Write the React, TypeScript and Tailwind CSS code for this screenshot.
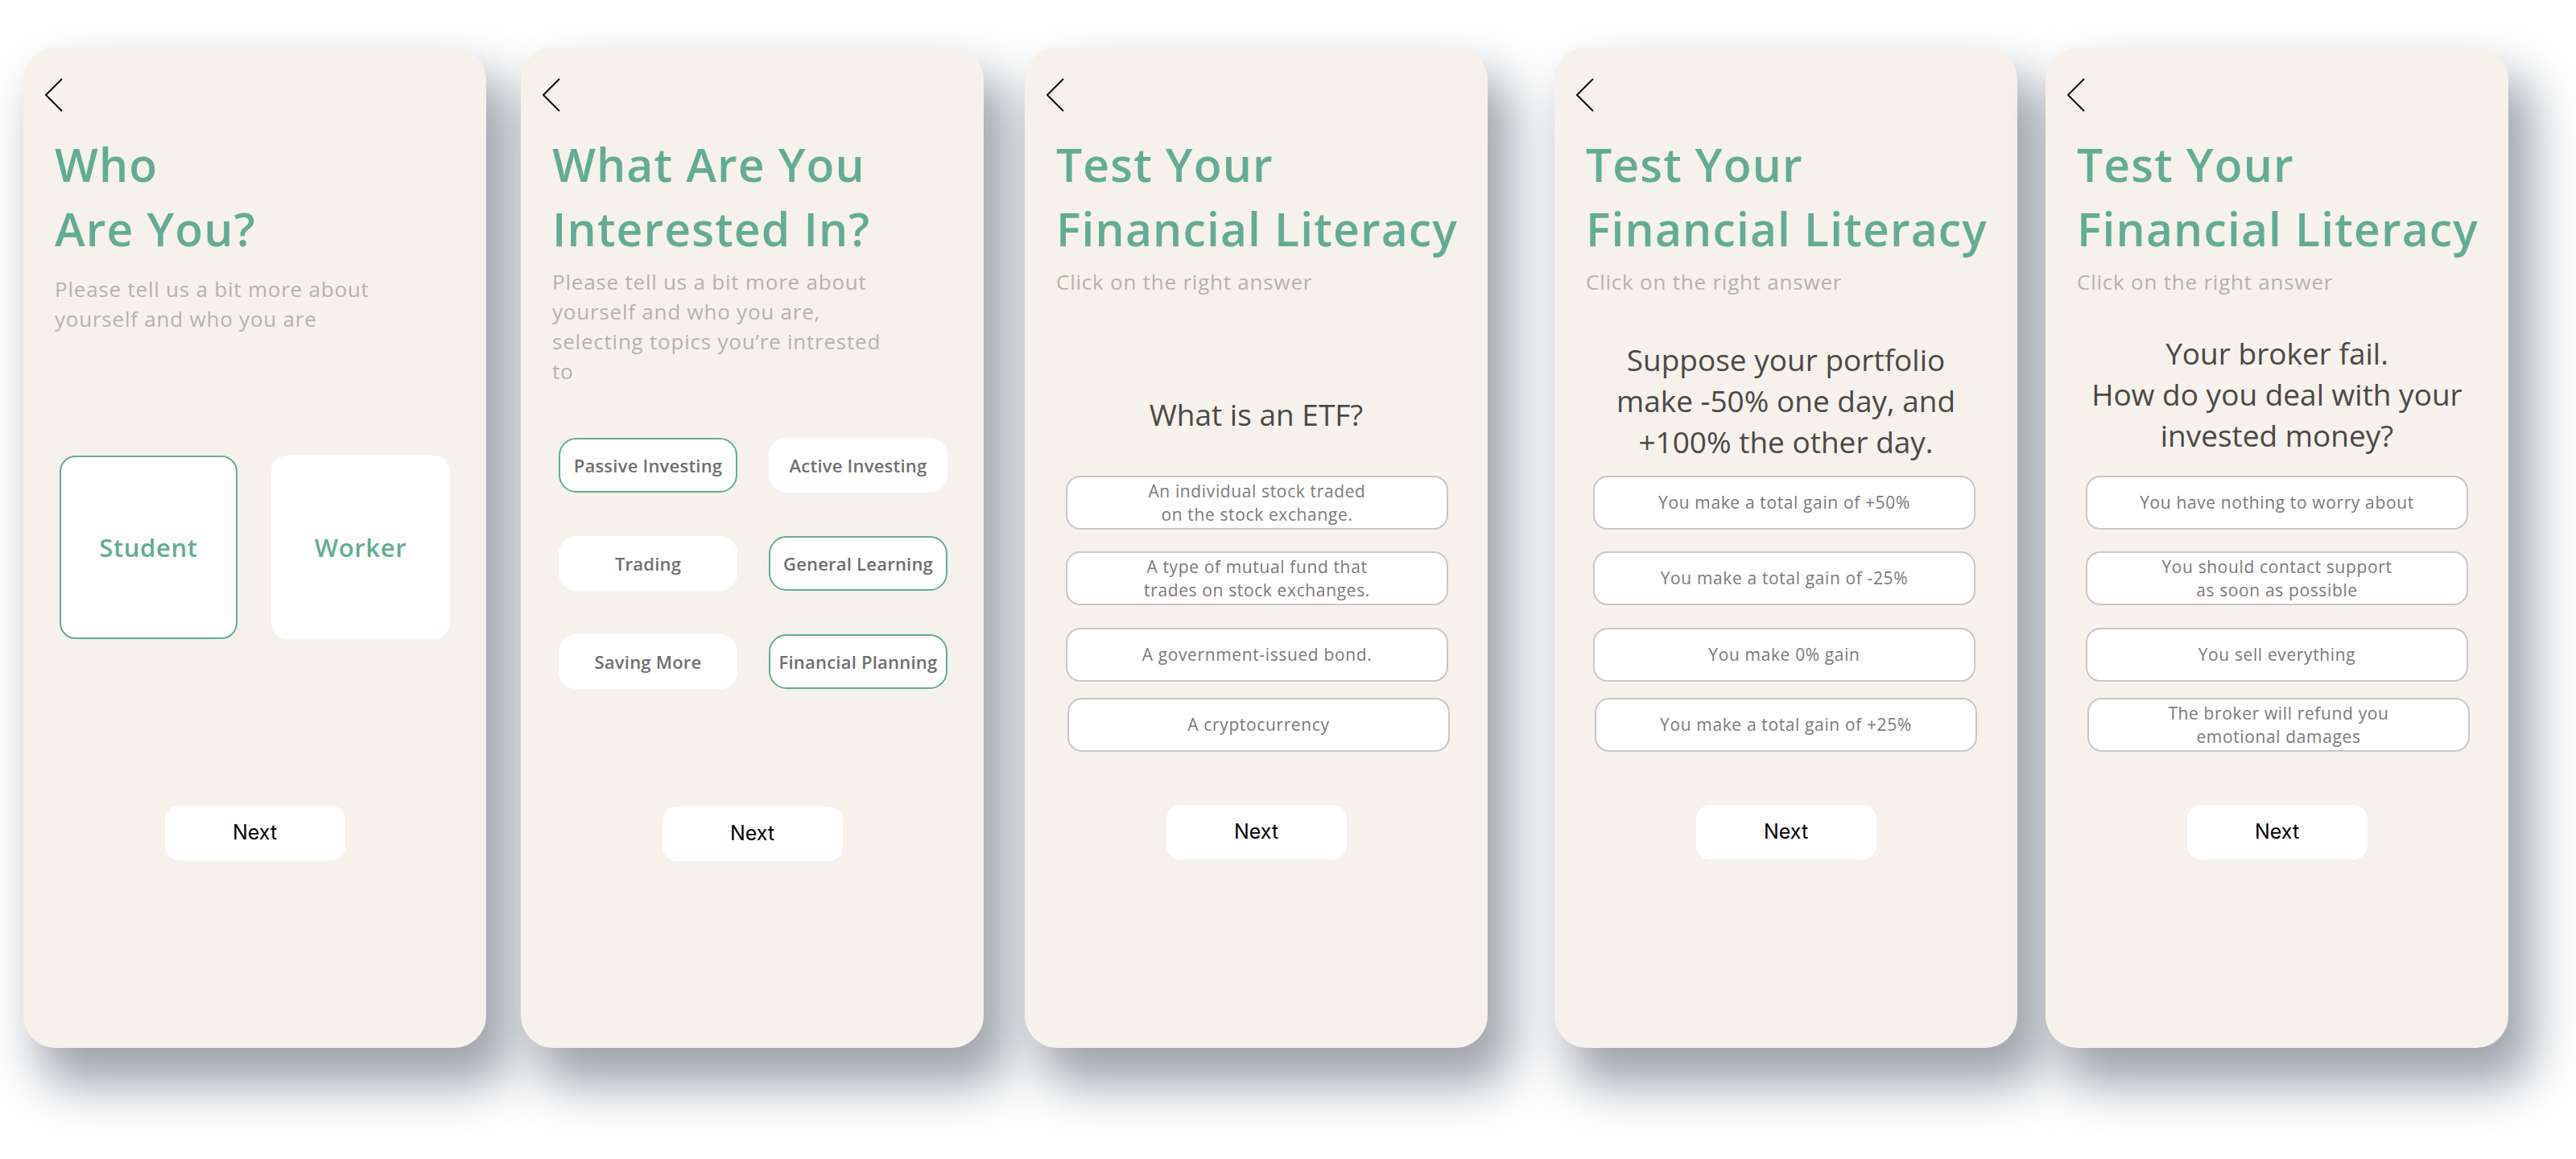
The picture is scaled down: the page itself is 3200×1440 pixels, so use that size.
import type { ReactNode } from 'react';

const green = 'text-[#61ad93]';

function BackArrow() {
  return (
    <div className="h-[40px] -ml-[12px]">
      <svg width="22" height="42" viewBox="0 0 22 42" fill="none">
        <polyline points="21,1 1,21 21,41" stroke="#111" strokeWidth="2" strokeLinejoin="miter" />
      </svg>
    </div>
  );
}

function Header({ title, subtitle, gap = 'mt-[8px]' }: { title: ReactNode; subtitle: ReactNode; gap?: string }) {
  return (
    <>
      <BackArrow />
      <h1 className={`mt-[27px] text-[57px] leading-[80px] font-semibold tracking-[0.02em] whitespace-nowrap ${green}`}>{title}</h1>
      <p className={`${gap} text-[26px] leading-[37px] tracking-[0.03em] text-[#b7b1ac] whitespace-nowrap`}>{subtitle}</p>
    </>
  );
}

function NextButton({ mt }: { mt: string }) {
  return (
    <button
      className={`${mt} self-center w-[224px] h-[68px] rounded-[18px] bg-white text-[25px] text-black font-['Inter',sans-serif]`}
    >
      Next
    </button>
  );
}

function Card({ children, className = '' }: { children: ReactNode; className?: string }) {
  return (
    <div
      className={`w-[575px] h-[1243px] shrink-0 rounded-[40px] bg-[#f6f1eb] shadow-[24px_40px_60px_6px_rgba(62,74,90,0.5)] flex flex-col px-[39px] pt-[38px] ${className}`}
    >
      {children}
    </div>
  );
}

function Answer({ children, className = '' }: { children: ReactNode; className?: string }) {
  return (
    <div
      className={`w-[475px] h-[67px] rounded-[18px] border-2 border-[#cac6c2] bg-white flex items-center justify-center text-center text-[21px] leading-[29px] tracking-[0.03em] text-[#7a7a7a] whitespace-nowrap ${className}`}
    >
      <span>{children}</span>
    </div>
  );
}

function Answers({ items, ml }: { items: ReactNode[]; ml: string }) {
  return (
    <div className={`flex flex-col ${ml}`}>
      <Answer>{items[0]}</Answer>
      <Answer className="mt-[27px]">{items[1]}</Answer>
      <Answer className="mt-[28px]">{items[2]}</Answer>
      <Answer className="mt-[20px] ml-[2px]">{items[3]}</Answer>
    </div>
  );
}

const chips = [
  { label: 'Passive Investing', on: true },
  { label: 'Active Investing', on: false },
  { label: 'Trading', on: false },
  { label: 'General Learning', on: true },
  { label: 'Saving More', on: false },
  { label: 'Financial Planning', on: true },
];

export default function App() {
  return (
    <div className="w-[3200px] h-[1440px] bg-white overflow-hidden font-['Open_Sans',sans-serif] flex items-start pt-[59px] pl-[29px]">
      {/* who are you */}
      <Card>
        <Header
          gap="mt-[17px]"
          title={<>Who<br />Are You?</>}
          subtitle={<>Please tell us a bit more about<br />yourself and who you are</>}
        />
        <div className="mt-[151px] ml-[6px] grid grid-cols-[221px_222px] gap-[42px]">
          <div className={`h-[228px] rounded-[20px] bg-white border-2 border-[#61ad93] flex items-center justify-center text-[31px] font-semibold tracking-[0.02em] ${green}`}>
            Student
          </div>
          <div className={`h-[228px] rounded-[20px] bg-white flex items-center justify-center text-[31px] font-semibold tracking-[0.02em] ${green}`}>
            Worker
          </div>
        </div>
        <NextButton mt="mt-[207px]" />
      </Card>

      {/* interests */}
      <Card className="ml-[43px]">
        <Header
          title={<>What Are You<br />Interested In?</>}
          subtitle={<>Please tell us a bit more about<br />yourself and who you are,<br />selecting topics you’re intrested<br />to</>}
        />
        <div className="mt-[64px] ml-[8px] w-[483px] grid grid-cols-2 gap-x-[39px] gap-y-[54px]">
          {chips.map((c) => (
            <div
              key={c.label}
              className={`h-[68px] rounded-[22px] bg-white border-2 flex items-center justify-center text-[22px] font-semibold tracking-[0.01em] text-[#6f6f6f] whitespace-nowrap ${
                c.on ? 'border-[#61ad93]' : 'border-transparent'
              }`}
            >
              {c.label}
            </div>
          ))}
        </div>
        <NextButton mt="mt-[146px]" />
      </Card>

      {/* quiz 1 */}
      <Card className="ml-[51px]">
        <Header title={<>Test Your<br />Financial Literacy</>} subtitle="Click on the right answer" />
        <p className="mt-[120px] text-center text-[37px] leading-[51px] text-[#4b4845]">What is an ETF?</p>
        <div className="mt-[51px]">
          <Answers
            ml="ml-[12px]"
            items={[
              <>An individual stock traded<br />on the stock exchange.</>,
              <>A type of mutual fund that<br />trades on stock exchanges.</>,
              'A government-issued bond.',
              'A cryptocurrency',
            ]}
          />
        </div>
        <NextButton mt="mt-[66px]" />
      </Card>

      {/* quiz 2 */}
      <Card className="ml-[83px]">
        <Header title={<>Test Your<br />Financial Literacy</>} subtitle="Click on the right answer" />
        <p className="mt-[52px] text-center text-[37px] leading-[51px] text-[#4b4845] whitespace-nowrap">
          Suppose your portfolio<br />make -50% one day, and<br />+100% the other day.
        </p>
        <div className="mt-[17px]">
          <Answers
            ml="ml-[9px]"
            items={[
              'You make a total gain of +50%',
              'You make a total gain of -25%',
              'You make 0% gain',
              'You make a total gain of +25%',
            ]}
          />
        </div>
        <NextButton mt="mt-[66px]" />
      </Card>

      {/* quiz 3 */}
      <Card className="ml-[35px]">
        <Header title={<>Test Your<br />Financial Literacy</>} subtitle="Click on the right answer" />
        <p className="mt-[44px] text-center text-[37px] leading-[51px] text-[#4b4845] whitespace-nowrap">
          Your broker fail.<br />How do you deal with your<br />invested money?
        </p>
        <div className="mt-[25px]">
          <Answers
            ml="ml-[11px]"
            items={[
              'You have nothing to worry about',
              <>You should contact support<br />as soon as possible</>,
              'You sell everything',
              <>The broker will refund you<br />emotional damages</>,
            ]}
          />
        </div>
        <NextButton mt="mt-[66px]" />
      </Card>
    </div>
  );
}
